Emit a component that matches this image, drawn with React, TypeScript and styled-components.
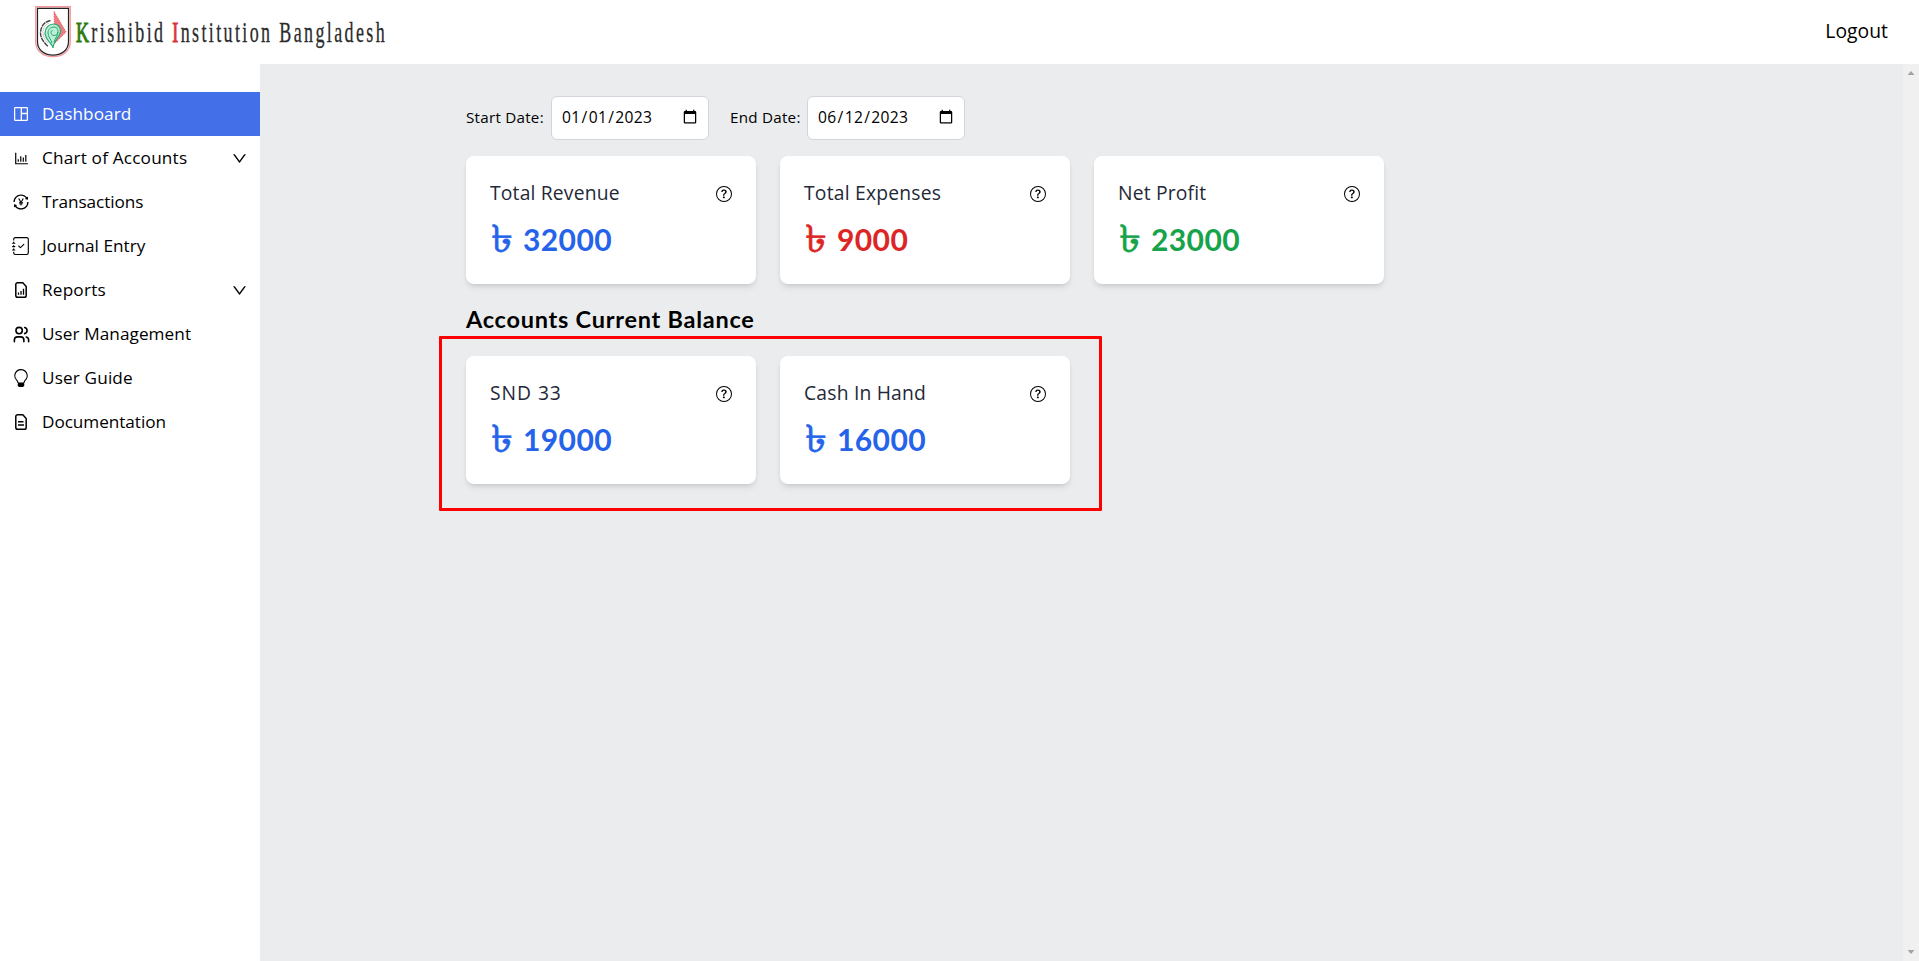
import React from "react";
import styled, { createGlobalStyle } from "styled-components";
import { AiOutlineBarChart, AiOutlineDown, AiOutlineTransaction } from "react-icons/ai";
import { BsJournalCheck, BsLightbulb, BsQuestionCircle } from "react-icons/bs";
import { TbUsers } from "react-icons/tb";

const GlobalStyle = createGlobalStyle`
  *, *::before, *::after { box-sizing: border-box; }
  body {
    margin: 0;
    background: #fff;
    color: #000;
    font-family: "Open Sans", "Noto Sans", sans-serif;
    overflow: hidden;
  }
  h2, h3, p { margin: 0; }
`;

const Page = styled.div`
  display: flex;
  flex-direction: column;
  height: 100vh;
`;

const Header = styled.header`
  display: flex;
  align-items: center;
  justify-content: space-between;
  flex: none;
  height: 64px;
  padding: 0 31px 0 35px;
`;

const Brand = styled.div`
  display: flex;
  align-items: center;
  gap: 5px;
`;

const BrandName = styled.span`
  width: 320px;
  font: 400 29px/36px "Liberation Serif", serif;
  letter-spacing: 3.85px;
  white-space: nowrap;
  color: #2b2b2b;
  -webkit-text-stroke: 0.3px currentColor;
  transform: scaleX(0.62);
  transform-origin: left center;
`;

const Initial = styled.span<{ $color: string }>`
  color: ${(p) => p.$color};
  -webkit-text-stroke: 1.1px ${(p) => p.$color};
`;

const Logout = styled.a`
  padding-bottom: 2px;
  font-size: 19.3px;
  line-height: 28px;
  letter-spacing: 0.05px;
`;

const Body = styled.div`
  display: flex;
  flex: 1;
  min-height: 0;
`;

const Sidebar = styled.nav`
  display: flex;
  flex-direction: column;
  flex: none;
  width: 260px;
  padding-top: 28px;
`;

const NavItem = styled.a<{ $active?: boolean }>`
  display: flex;
  align-items: center;
  height: 44px;
  padding: 0 12px 0 11px;
  color: ${(p) => (p.$active ? "#fff" : "#000")};
  background: ${(p) => (p.$active ? "#436fe8" : "transparent")};
`;

const NavIcon = styled.span`
  display: flex;
  align-items: center;
  justify-content: center;
  width: 20px;
  margin-right: 11px;
`;

const NavLabel = styled.span<{ $spacing: number }>`
  flex: 1;
  font-size: 17.2px;
  line-height: 24px;
  letter-spacing: ${(p) => p.$spacing}px;
`;

const Main = styled.main`
  flex: 1;
  padding: 32px 0 0 206px;
  background: #ebecee;
`;

const Filters = styled.div`
  display: flex;
  align-items: center;
  height: 44px;
`;

const DateField = styled.label<{ $labelWidth: number }>`
  display: grid;
  grid-template-columns: ${(p) => p.$labelWidth}px 158px;
  align-items: center;
  margin-right: 21px;
`;

const DateLabel = styled.span`
  padding-bottom: 2px;
  font-size: 15.2px;
  line-height: 22px;
  letter-spacing: 0.25px;
`;

const DateInput = styled.input`
  width: 158px;
  height: 44px;
  padding: 0 8px 2px 9px;
  border: 1px solid #d1d5db;
  border-radius: 6px;
  background: #fff;
  color: #000;
  font: 400 15.6px/24px "Open Sans", sans-serif;
  letter-spacing: 0.35px;
`;

const CardRow = styled.div`
  display: flex;
  gap: 24px;
  margin-top: 16px;
`;

const Card = styled.article`
  width: 290px;
  height: 128px;
  padding: 24px;
  border-radius: 8px;
  background: #fff;
  box-shadow: 0 4px 6px -1px rgba(0, 0, 0, 0.1), 0 2px 4px -2px rgba(0, 0, 0, 0.1);
`;

const CardHead = styled.div`
  display: flex;
  align-items: center;
  justify-content: space-between;
  height: 28px;
`;

const CardTitle = styled.h3<{ $spacing: number }>`
  padding-bottom: 2px;
  font-size: 19.3px;
  font-weight: 400;
  line-height: 26px;
  letter-spacing: ${(p) => p.$spacing}px;
  color: #1f2937;
`;

const Amount = styled.p<{ $color: string }>`
  display: flex;
  align-items: baseline;
  gap: 9px;
  margin-top: 13px;
  padding-left: 1px;
  font-family: Lato, sans-serif;
  font-size: 30px;
  font-weight: 700;
  line-height: 36px;
  letter-spacing: 0.4px;
  color: ${(p) => p.$color};
`;

const Taka = styled.span`
  width: 23px;
  font-size: 32px;
  font-weight: 400;
  line-height: 36px;
  -webkit-text-stroke: 0.5px currentColor;
  transform: scale(1.4, 1.2);
  transform-origin: 0 75%;
`;

const SectionTitle = styled.h2`
  margin-top: 19px;
  font-family: Lato, sans-serif;
  font-size: 23.5px;
  font-weight: 700;
  line-height: 32px;
  letter-spacing: 0.75px;
`;

const Balances = styled.section`
  position: relative;
  width: 604px;
  height: 128px;
  margin-top: 21px;
`;

const Highlight = styled.div`
  position: absolute;
  inset: -20px -32px -27px -27px;
  border: 3px solid #f00;
  border-radius: 1px;
  pointer-events: none;
`;

const Scrollbar = styled.div`
  display: flex;
  flex-direction: column;
  justify-content: space-between;
  align-items: center;
  flex: none;
  width: 16px;
  padding: 7px 0;
  background: #f0f0f0;
`;

const ScrollArrow = styled.span<{ $down?: boolean }>`
  width: 7px;
  height: 4px;
  background: #a3a3a3;
  clip-path: ${(p) => (p.$down ? "polygon(0 0, 100% 0, 50% 100%)" : "polygon(50% 0, 100% 100%, 0 100%)")};
`;

const Crest = () => (
  <svg width="36" height="52" viewBox="0 0 36 52" fill="none">
    <path d="M.8.8h34.4v35.5c0 8-7 14.3-17.2 14.3S.8 44.3.8 36.3z" stroke="#f3979b" strokeWidth="1.4" />
    <path d="M2.5 2.4h31v33.4c0 7.5-6 13.3-15.5 13.3S2.5 43.3 2.5 35.8z" stroke="#222" strokeWidth="1.2" />
    <path d="M19 5.5l12 20.5-11 11z" fill="#ef7b7f" stroke="#e05258" strokeWidth=".8" strokeDasharray="1.5 1" />
    <path d="M18 42c0-4-8-8-8-15 0-5 4-9 8.5-9 4 0 7 3 7 7 0 6-7 9-7.5 17z" fill="#bdeed6" stroke="#27a871" strokeWidth="1.2" />
    <path d="M17 37c-1-4-4-6-4-10s3-6 6-6 4 2 4 4.5-2 4-4 4-3-1.5-3-3 1-2 2-2M19 36c1-4 4-6 4-10" stroke="#27a871" strokeWidth="1" />
    <path d="M15.5 14.5c-6 1-10 6-10 12.5 0 5 3 9 7.5 13.5" stroke="#444" strokeWidth="1.4" strokeDasharray="5 .6" />
    <path d="M14 17c-4 2-6.5 5-6 10 0 4 2 7 5 10" stroke="#999" strokeWidth=".5" />
  </svg>
);

const DashboardIcon = () => (
  <svg width="14" height="14" viewBox="0 0 14 14" fill="none" stroke="#fff" strokeWidth="1.3">
    <rect x=".6" y=".6" width="12.8" height="12.8" rx="1" />
    <path d="M7.3.6v12.8M7.3 6.5h6.1" />
  </svg>
);

const FileIcon = ({ children }: { children: React.ReactNode }) => (
  <svg width="12" height="16" viewBox="0 0 12 16" fill="none" stroke="currentColor">
    <path
      d="M2.6.8h5.2l3.4 3.6v9a1.8 1.8 0 0 1-1.8 1.8H2.6A1.8 1.8 0 0 1 .8 13.4V2.6A1.8 1.8 0 0 1 2.6.8z"
      strokeWidth="1.5"
      strokeLinejoin="round"
    />
    {children}
  </svg>
);

const ReportIcon = () => (
  <FileIcon>
    <path d="M3.5 12.8v-2.3M6 12.8V9M8.5 12.8V6.8" strokeWidth="1.3" />
  </FileIcon>
);

const DocumentIcon = () => (
  <FileIcon>
    <path d="M3 7.7h5.5M3 11h6" strokeWidth="1.4" />
  </FileIcon>
);

type NavEntry = { label: string; spacing: number; icon: React.ReactNode; active?: boolean; expandable?: boolean };

const navigation: NavEntry[] = [
  { label: "Dashboard", spacing: 0.08, icon: <DashboardIcon />, active: true },
  { label: "Chart of Accounts", spacing: 0.18, icon: <AiOutlineBarChart size={17} />, expandable: true },
  { label: "Transactions", spacing: -0.05, icon: <AiOutlineTransaction size={18} /> },
  { label: "Journal Entry", spacing: 0, icon: <BsJournalCheck size={18} /> },
  { label: "Reports", spacing: 0.2, icon: <ReportIcon />, expandable: true },
  { label: "User Management", spacing: 0.06, icon: <TbUsers size={19} /> },
  { label: "User Guide", spacing: 0.14, icon: <BsLightbulb size={18} /> },
  { label: "Documentation", spacing: -0.06, icon: <DocumentIcon /> },
];

type Balance = { title: string; spacing: number; value: string; color: string };

const BLUE = "#2563eb";

const totals: Balance[] = [
  { title: "Total Revenue", spacing: 0.18, value: "32000", color: BLUE },
  { title: "Total Expenses", spacing: 0.22, value: "9000", color: "#dc2626" },
  { title: "Net Profit", spacing: 0.18, value: "23000", color: "#16a34a" },
];

const accounts: Balance[] = [
  { title: "SND 33", spacing: 0.95, value: "19000", color: BLUE },
  { title: "Cash In Hand", spacing: 0.2, value: "16000", color: BLUE },
];

const BalanceCard = ({ title, spacing, value, color }: Balance) => (
  <Card>
    <CardHead>
      <CardTitle $spacing={spacing}>{title}</CardTitle>
      <BsQuestionCircle size={16} />
    </CardHead>
    <Amount $color={color}>
      <Taka>৳</Taka>
      {value}
    </Amount>
  </Card>
);

export default function App() {
  return (
    <Page>
      <GlobalStyle />
      <Header>
        <Brand>
          <Crest />
          <BrandName>
            <Initial $color="#2f7a0c">K</Initial>rishibid <Initial $color="#d9363c">I</Initial>nstitution Bangladesh
          </BrandName>
        </Brand>
        <Logout>Logout</Logout>
      </Header>
      <Body>
        <Sidebar>
          {navigation.map((item) => (
            <NavItem key={item.label} $active={item.active}>
              <NavIcon>{item.icon}</NavIcon>
              <NavLabel $spacing={item.spacing}>{item.label}</NavLabel>
              {item.expandable && <AiOutlineDown size={17} />}
            </NavItem>
          ))}
        </Sidebar>
        <Main>
          <Filters>
            <DateField $labelWidth={85}>
              <DateLabel>Start Date:</DateLabel>
              <DateInput type="date" defaultValue="2023-01-01" />
            </DateField>
            <DateField $labelWidth={77}>
              <DateLabel>End Date:</DateLabel>
              <DateInput type="date" defaultValue="2023-06-12" />
            </DateField>
          </Filters>
          <CardRow>
            {totals.map((item) => (
              <BalanceCard key={item.title} {...item} />
            ))}
          </CardRow>
          <SectionTitle>Accounts Current Balance</SectionTitle>
          <Balances>
            <CardRow>
              {accounts.map((item) => (
                <BalanceCard key={item.title} {...item} />
              ))}
            </CardRow>
            <Highlight />
          </Balances>
        </Main>
        <Scrollbar>
          <ScrollArrow />
          <ScrollArrow $down />
        </Scrollbar>
      </Body>
    </Page>
  );
}
